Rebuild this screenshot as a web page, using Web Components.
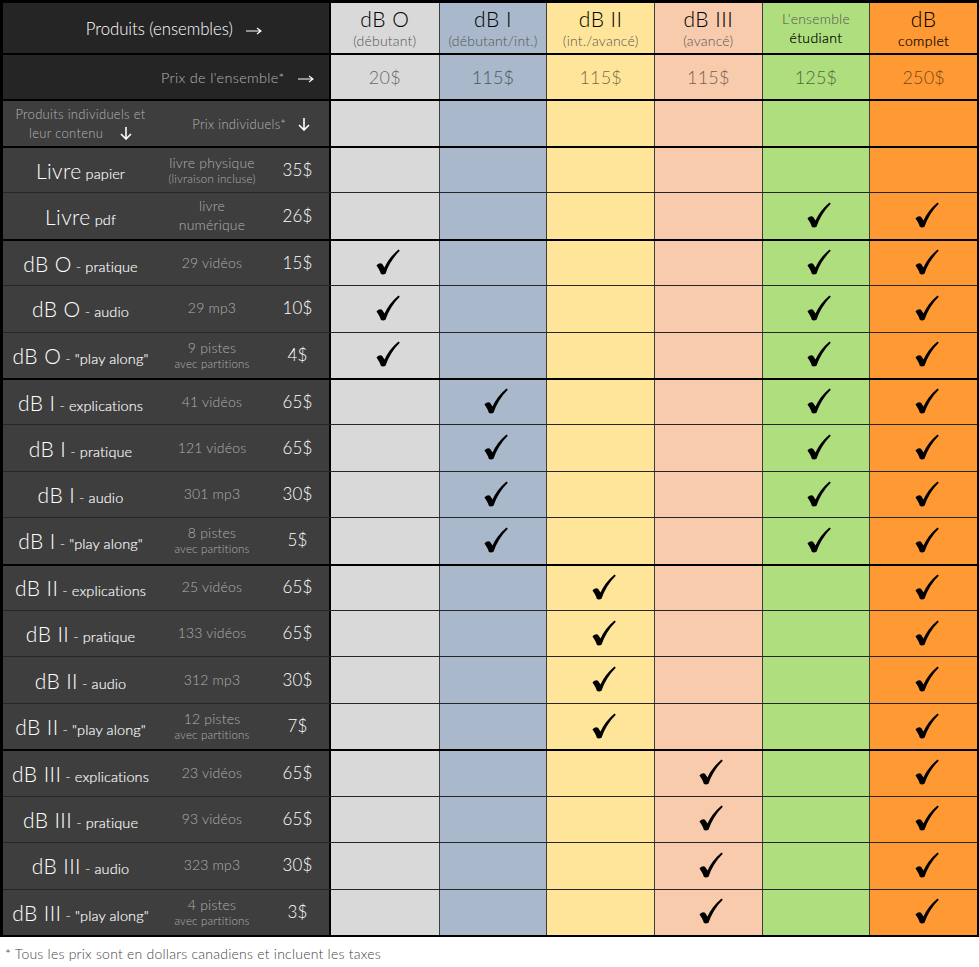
<!DOCTYPE html>
<html lang="fr">
<head>
<meta charset="utf-8">
<title>Produits</title>
<style>
  html, body { margin: 0; background: #fff; }
  body { font-family: Lato, "Open Sans", sans-serif; font-weight: 300; }
</style>
</head>
<body>
<price-table>
  <table-row h="53" line="top" dark="#252525">
    <div slot="left" style="width:100%;text-align:center;padding-left:16px;box-sizing:border-box;font-size:16.800px;color:#fff;letter-spacing:-.05px">Produits (ensembles) <flow-arrow dir="right" gap="9"></flow-arrow></div>
    <plan-cell tone="0"><plan-head title="dB O" note="(débutant)"></plan-head></plan-cell>
    <plan-cell tone="1"><plan-head title="dB I" note="(débutant/int.)"></plan-head></plan-cell>
    <plan-cell tone="2"><plan-head title="dB II" note="(int./avancé)"></plan-head></plan-cell>
    <plan-cell tone="3"><plan-head title="dB III" note="(avancé)"></plan-head></plan-cell>
    <plan-cell tone="4"><plan-head note="L'ensemble" strong="étudiant"></plan-head></plan-cell>
    <plan-cell tone="5"><plan-head title="dB" strong="complet"></plan-head></plan-cell>
  </table-row>
  <table-row h="46" line="thick" dark="#252525">
    <div slot="left" style="width:100%;text-align:right;padding-right:15px;box-sizing:border-box;font-size:14.500px;color:#b5b5b5;letter-spacing:.3px">Prix de l'ensemble* <flow-arrow dir="right" gap="9"></flow-arrow></div>
    <plan-cell tone="0"><plan-price>20$</plan-price></plan-cell>
    <plan-cell tone="1"><plan-price>115$</plan-price></plan-cell>
    <plan-cell tone="2"><plan-price>115$</plan-price></plan-cell>
    <plan-cell tone="3"><plan-price>115$</plan-price></plan-cell>
    <plan-cell tone="4"><plan-price>125$</plan-price></plan-cell>
    <plan-cell tone="5"><plan-price>250$</plan-price></plan-cell>
  </table-row>
  <table-row h="47" line="thick" dark="#3e3e3e">
    <div slot="left" style="display:flex;width:100%;align-items:center;font-size:13px;color:#b5b5b5;letter-spacing:.3px">
      <div style="width:155px;text-align:center;line-height:19px">Produits individuels et<br>leur contenu <flow-arrow dir="down" gap="13"></flow-arrow></div>
      <div style="flex:1;text-align:right;padding-right:19px">Prix individuels* <flow-arrow dir="down" gap="8"></flow-arrow></div>
    </div>
    <plan-cell tone="0"></plan-cell><plan-cell tone="1"></plan-cell><plan-cell tone="2"></plan-cell>
    <plan-cell tone="3"></plan-cell><plan-cell tone="4"></plan-cell><plan-cell tone="5"></plan-cell>
  </table-row>

  <product-row line="thick" big="Livre" small="papier" desc="livre physique" sub="(livraison incluse)" price="35$" checks=""></product-row>
  <product-row line="thin" big="Livre" small="pdf" desc="livre" desc2="numérique" price="26$" checks="4 5"></product-row>
  <product-row line="thick" big="dB O" small="- pratique" desc="29 vidéos" price="15$" checks="0 4 5"></product-row>
  <product-row line="thin" big="dB O" small="- audio" desc="29 mp3" price="10$" checks="0 4 5"></product-row>
  <product-row line="thin" big="dB O" small='- "play along"' desc="9 pistes" sub="avec partitions" price="4$" checks="0 4 5"></product-row>
  <product-row line="thick" big="dB I" small="- explications" desc="41 vidéos" price="65$" checks="1 4 5"></product-row>
  <product-row line="thin" big="dB I" small="- pratique" desc="121 vidéos" price="65$" checks="1 4 5"></product-row>
  <product-row line="thin" big="dB I" small="- audio" desc="301 mp3" price="30$" checks="1 4 5"></product-row>
  <product-row line="thin" big="dB I" small='- "play along"' desc="8 pistes" sub="avec partitions" price="5$" checks="1 4 5"></product-row>
  <product-row line="thick" big="dB II" small="- explications" desc="25 vidéos" price="65$" checks="2 5"></product-row>
  <product-row line="thin" big="dB II" small="- pratique" desc="133 vidéos" price="65$" checks="2 5"></product-row>
  <product-row line="thin" big="dB II" small="- audio" desc="312 mp3" price="30$" checks="2 5"></product-row>
  <product-row line="thin" big="dB II" small='- "play along"' desc="12 pistes" sub="avec partitions" price="7$" checks="2 5"></product-row>
  <product-row line="thick" big="dB III" small="- explications" desc="23 vidéos" price="65$" checks="3 5"></product-row>
  <product-row line="thin" big="dB III" small="- pratique" desc="93 vidéos" price="65$" checks="3 5"></product-row>
  <product-row line="thin" big="dB III" small="- audio" desc="323 mp3" price="30$" checks="3 5"></product-row>
  <product-row line="thin" big="dB III" small='- "play along"' desc="4 pistes" sub="avec partitions" price="3$" checks="3 5"></product-row>
</price-table>
<price-note>* Tous les prix sont en dollars canadiens et incluent les taxes</price-note>

<script>
const TONES = ['#d9d9d9', '#a9b8ca', '#ffe599', '#f8cbad', '#aede7d', '#ff9933'];

class PriceTable extends HTMLElement {
    constructor() {
        super();
        this.attachShadow({ mode: 'open' });
        this.shadowRoot.innerHTML = `
            <style>
                :host { display: block; background: #000; padding: 0 2px 2px 3px; }
            </style>
            <slot></slot>`;
    }
}

class TableRow extends HTMLElement {
    constructor() {
        super();
        this.attachShadow({ mode: 'open' });
    }

    connectedCallback() {
        let h = this.getAttribute('h') || '46.41';
        let line = this.getAttribute('line') || 'thin';
        let top = line === 'top' ? 3 : line === 'thick' ? 2 : 1;
        let dark = this.getAttribute('dark') || '#3e3e3e';
        this.shadowRoot.innerHTML = `
            <style>
                :host {
                    display: grid;
                    grid-template-columns: 328px repeat(6, 1fr);
                    height: ${h}px;
                    box-sizing: border-box;
                    padding-top: ${top}px;
                    background: ${line === 'thin' ? '#262626' : '#000'};
                }
                .left {
                    display: flex;
                    align-items: center;
                    background: ${dark};
                    border-right: 2px solid #000;
                    min-width: 0;
                }
            </style>
            <div class="left"><slot name="left"></slot></div>
            <slot></slot>`;
    }
}

class PlanCell extends HTMLElement {
    constructor() {
        super();
        this.attachShadow({ mode: 'open' });
    }

    connectedCallback() {
        let tone = +this.getAttribute('tone');
        this.shadowRoot.innerHTML = `
            <style>
                :host {
                    display: flex;
                    align-items: center;
                    justify-content: center;
                    background: ${TONES[tone]};
                    box-sizing: border-box;
                    border-left: ${tone === 0 ? '0' : '1.5px solid #3d3d3d'};
                    min-width: 0;
                }
            </style>
            <slot></slot>`;
    }
}

class PlanHead extends HTMLElement {
    constructor() {
        super();
        this.attachShadow({ mode: 'open' });
    }

    connectedCallback() {
        let title = this.getAttribute('title');
        let note = this.getAttribute('note');
        let strong = this.getAttribute('strong');
        this.removeAttribute('title');
        let titleHtml = title ? `<div class="title">${title}</div>` : '';
        let noteHtml = note ? `<div class="note">${note}</div>` : '';
        let strongHtml = strong ? `<div class="strong">${strong}</div>` : '';
        this.shadowRoot.innerHTML = `
            <style>
                :host { display: block; text-align: center; white-space: nowrap; }
                .title { font-size: 21px; line-height: 24px; color: #000; letter-spacing: .5px; }
                .note { font-size: 14px; line-height: 19px; color: #555; letter-spacing: .2px; }
                .strong { font-size: 14px; line-height: 19px; color: #000; font-weight: 300; letter-spacing: .4px; -webkit-text-stroke: .2px #000; }
            </style>
            ${titleHtml}${noteHtml}${strongHtml}`;
    }
}

class PlanPrice extends HTMLElement {
    constructor() {
        super();
        this.attachShadow({ mode: 'open' });
        this.shadowRoot.innerHTML = `
            <style>
                :host { display: block; font-size: 18px; color: #000; opacity: .55; letter-spacing: .2px; }
            </style>
            <slot></slot>`;
    }
}

class FlowArrow extends HTMLElement {
    constructor() {
        super();
        this.attachShadow({ mode: 'open' });
    }

    connectedCallback() {
        let down = this.getAttribute('dir') === 'down';
        let gap = this.getAttribute('gap') || '9';
        this.shadowRoot.innerHTML = `
            <style>
                :host { display: inline-block; margin-left: ${gap}px; vertical-align: ${down ? '-2px' : '0'}; line-height: 0; }
            </style>
            ${down
                ? `<svg width="12" height="13" viewBox="0 0 12 13" fill="none" stroke="#fff" stroke-width="1.6"><path d="M6 0V12M1 7l5 5 5-5"/></svg>`
                : `<svg width="16" height="8" viewBox="0 0 16 8" fill="none" stroke="#fff" stroke-width="1.1"><path d="M0 4H15M11 1l4 3-4 3"/></svg>`}`;
    }
}

class CheckMark extends HTMLElement {
    constructor() {
        super();
        this.attachShadow({ mode: 'open' });
        this.shadowRoot.innerHTML = `
            <style>
                :host { display: block; line-height: 0; margin: 0 0 2px 6px; }
            </style>
            <svg width="24" height="26" viewBox="0 0 24 26"><path fill="#000" d="M0.5 16.500C2.500 14 5 13.500 6.200 15L8.500 18.500C11 12.500 16 6 22.500 0.500L23.800 1.700C17 8.500 12.200 16.500 9.500 24.800C8 25.600 5.800 25.600 4.800 24.800C4 21.800 2.300 19 0.500 16.500Z"/></svg>`;
    }
}

class ProductRow extends HTMLElement {
    constructor() {
        super();
        this.attachShadow({ mode: 'open' });
    }

    connectedCallback() {
        let big = this.getAttribute('big');
        let small = this.getAttribute('small');
        let desc = this.getAttribute('desc');
        let desc2 = this.getAttribute('desc2');
        let sub = this.getAttribute('sub');
        let price = this.getAttribute('price');
        let line = this.getAttribute('line');
        let checks = (this.getAttribute('checks') || '').split(' ');
        let cells = TONES.map((v, i) => {
            return `<plan-cell tone="${i}">${checks.includes(String(i)) ? '<check-mark></check-mark>' : ''}</plan-cell>`;
        }).join('');
        this.shadowRoot.innerHTML = `
            <style>
                :host { display: block; }
                .info { display: grid; grid-template-columns: 155px 108px 63px; width: 100%; align-items: center; color: #fff; }
                .name { text-align: center; white-space: nowrap; font-size: 14.500px; font-weight: 300; letter-spacing: .1px; -webkit-text-stroke: .15px #fff; }
                .name b { font-weight: 300; font-size: 21px; letter-spacing: .4px; -webkit-text-stroke: 0; }
                .desc { text-align: center; white-space: nowrap; color: #b0b0b0; font-size: 14px; line-height: 19px; letter-spacing: .2px; margin-top: -2px; }
                .sub { font-size: 11.500px; line-height: 14px; }
                .price { text-align: center; font-size: 17px; letter-spacing: .2px; margin-top: -2px; }
            </style>
            <table-row line="${line}">
                <div slot="left" class="info">
                    <div class="name"><b>${big}</b> ${small}</div>
                    <div class="desc">${desc}${desc2 ? `<br>${desc2}` : ''}${sub ? `<div class="sub">${sub}</div>` : ''}</div>
                    <div class="price">${price}</div>
                </div>
                ${cells}
            </table-row>`;
    }
}

class PriceNote extends HTMLElement {
    constructor() {
        super();
        this.attachShadow({ mode: 'open' });
        this.shadowRoot.innerHTML = `
            <style>
                :host { display: block; padding: 8px 0 0 5px; font-size: 14px; line-height: 18px; color: #444; letter-spacing: .23px; }
            </style>
            <slot></slot>`;
    }
}

customElements.define('price-table', PriceTable);
customElements.define('table-row', TableRow);
customElements.define('plan-cell', PlanCell);
customElements.define('plan-head', PlanHead);
customElements.define('plan-price', PlanPrice);
customElements.define('flow-arrow', FlowArrow);
customElements.define('check-mark', CheckMark);
customElements.define('product-row', ProductRow);
customElements.define('price-note', PriceNote);
</script>
</body>
</html>
